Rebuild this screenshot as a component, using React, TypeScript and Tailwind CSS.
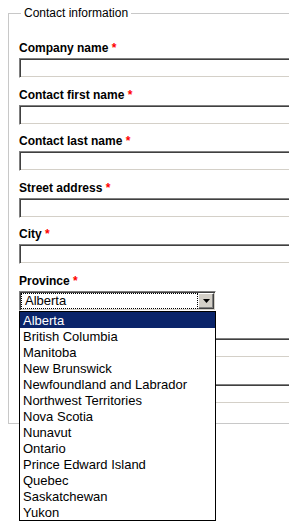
import React from 'react';

const textFields = ['Company name', 'Contact first name', 'Contact last name', 'Street address', 'City'];
// these two sit under the open list; only the right end of their inputs shows
const hiddenFields = ['Postal code', 'Phone number'];

const provinces = [
    'Alberta',
    'British Columbia',
    'Manitoba',
    'New Brunswick',
    'Newfoundland and Labrador',
    'Northwest Territories',
    'Nova Scotia',
    'Nunavut',
    'Ontario',
    'Prince Edward Island',
    'Quebec',
    'Saskatchewan',
    'Yukon',
];

const inset =
    'border border-t-[#808080] border-l-[#808080] border-b-white border-r-white shadow-[inset_1px_1px_0_#404040,inset_-1px_-1px_0_#d4d0c8] bg-white';

const Label: React.FC<{ text: string; hidden?: boolean }> = ({ text, hidden }) => (
    <label className={`block text-[12px] font-bold leading-[14px] ${hidden ? 'invisible' : ''}`}>
        {text} <span className="text-[#ff0000]">*</span>
    </label>
);

const TextField: React.FC<{ label: string; hidden?: boolean }> = ({ label, hidden }) => (
    <div>
        <Label text={label} hidden={hidden} />
        <div className={`mt-[3px] h-[20px] w-[300px] ${inset}`} />
    </div>
);

export default function App() {
    const selected = 'Alberta';

    return (
        <div className="relative h-[524px] w-[289px] overflow-hidden bg-white font-['Liberation_Sans',Arial,sans-serif] text-black">
            <fieldset className="ml-[8px] mt-[6px] w-[320px] border border-[#c8c8c8] pb-[19px] pl-[10px] pt-[21px]">
                <legend className="ml-[2px] px-[3px] text-[12px] leading-[14px]">Contact information</legend>
                <div className="flex flex-col gap-[9.6px]">
                    {textFields.map((f) => (
                        <TextField key={f} label={f} />
                    ))}

                    {/* Province select, closed state drawn here; open list lies over it below */}
                    <div>
                        <Label text="Province" />
                        <div className={`mt-[3px] flex h-[20px] w-[197px] p-[1px] ${inset}`}>
                            <div className="flex-1 border border-dotted border-black pl-[3px] text-[13px] leading-[14px]">
                                {selected}
                            </div>
                            <div className="flex w-[16px] items-center justify-center border border-t-white border-l-white border-b-[#404040] border-r-[#404040] bg-[#d4d0c8] shadow-[inset_-1px_-1px_0_#808080]">
                                <svg width="7" height="4" viewBox="0 0 7 4">
                                    <path d="M0 0h7L3.5 4z" fill="#000" />
                                </svg>
                            </div>
                        </div>
                    </div>

                    {hiddenFields.map((f) => (
                        <TextField key={f} label={f} hidden />
                    ))}
                </div>
            </fieldset>

            {/* open dropdown list */}
            <ul className="absolute left-[19px] top-[311px] w-[197px] border border-black bg-white text-[13px]">
                {provinces.map((p) => (
                    <li
                        key={p}
                        className={`h-[16px] pl-[3px] leading-[17px] ${p === selected ? 'bg-[#0a246a] text-white' : ''}`}
                    >
                        {p}
                    </li>
                ))}
            </ul>
        </div>
    );
}
